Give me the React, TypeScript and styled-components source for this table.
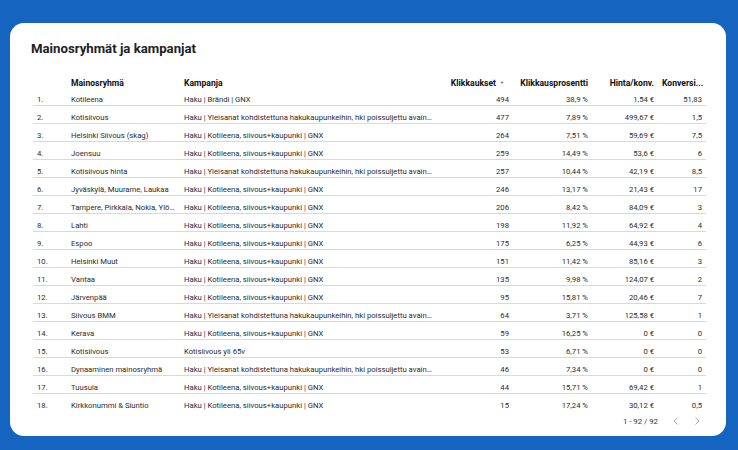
import styled, { createGlobalStyle } from "styled-components";

const GlobalStyle = createGlobalStyle`
  html, body {
    margin: 0;
    padding: 0;
    background: #1565c0;
  }
  body {
    font-family: Roboto, "Liberation Sans", sans-serif;
  }
`;

interface IRow {
    group: string
    campaign: string
    clicks: string
    ctr: string
    cost: string
    conv: string
}

const BRAND = "Haku | Kotileena, siivous+kaupunki | GNX";
const GENERIC = "Haku | Yleisanat kohdistettuna hakukaupunkeihin, hki poissuljettu avainsanat";

const rows: IRow[] = [
    {group: "Kotileena", campaign: "Haku | Brändi | GNX", clicks: "494", ctr: "38,9 %", cost: "1,54 €", conv: "51,83"},
    {group: "Kotisiivous", campaign: GENERIC, clicks: "477", ctr: "7,89 %", cost: "499,67 €", conv: "1,5"},
    {group: "Helsinki Siivous (skag)", campaign: BRAND, clicks: "264", ctr: "7,51 %", cost: "59,69 €", conv: "7,5"},
    {group: "Joensuu", campaign: BRAND, clicks: "259", ctr: "14,49 %", cost: "53,6 €", conv: "6"},
    {group: "Kotisiivous hinta", campaign: GENERIC, clicks: "257", ctr: "10,44 %", cost: "42,19 €", conv: "8,5"},
    {group: "Jyväskylä, Muurame, Laukaa", campaign: BRAND, clicks: "246", ctr: "13,17 %", cost: "21,43 €", conv: "17"},
    {group: "Tampere, Pirkkala, Nokia, Ylöjärvi", campaign: BRAND, clicks: "206", ctr: "8,42 %", cost: "84,09 €", conv: "3"},
    {group: "Lahti", campaign: BRAND, clicks: "198", ctr: "11,92 %", cost: "64,92 €", conv: "4"},
    {group: "Espoo", campaign: BRAND, clicks: "175", ctr: "6,25 %", cost: "44,93 €", conv: "6"},
    {group: "Helsinki Muut", campaign: BRAND, clicks: "151", ctr: "11,42 %", cost: "85,16 €", conv: "3"},
    {group: "Vantaa", campaign: BRAND, clicks: "135", ctr: "9,98 %", cost: "124,07 €", conv: "2"},
    {group: "Järvenpää", campaign: BRAND, clicks: "95", ctr: "15,81 %", cost: "20,46 €", conv: "7"},
    {group: "Siivous BMM", campaign: GENERIC, clicks: "64", ctr: "3,71 %", cost: "125,58 €", conv: "1"},
    {group: "Kerava", campaign: BRAND, clicks: "59", ctr: "16,25 %", cost: "0 €", conv: "0"},
    {group: "Kotisiivous", campaign: "Kotisiivous yli 65v", clicks: "53", ctr: "6,71 %", cost: "0 €", conv: "0"},
    {group: "Dynaaminen mainosryhmä", campaign: GENERIC, clicks: "46", ctr: "7,34 %", cost: "0 €", conv: "0"},
    {group: "Tuusula", campaign: BRAND, clicks: "44", ctr: "15,71 %", cost: "69,42 €", conv: "1"},
    {group: "Kirkkonummi & Siuntio", campaign: BRAND, clicks: "15", ctr: "17,24 %", cost: "30,12 €", conv: "0,5"},
];

const App = () => {
    return <SPage>
        <GlobalStyle/>
        <SCard>
            <STitle>Mainosryhmät ja kampanjat</STitle>
            <STable>
                <SHeaderRow>
                    <SCell/>
                    <SHeadCell>Mainosryhmä</SHeadCell>
                    <SHeadCell>Kampanja</SHeadCell>
                    <SHeadCell $right>Klikkaukset<SSortArrow>▼</SSortArrow></SHeadCell>
                    <SHeadCell $right>Klikkausprosentti</SHeadCell>
                    <SHeadCell $right>Hinta/konv.</SHeadCell>
                    <SHeadCell $right>Konversi...</SHeadCell>
                </SHeaderRow>
                {rows.map((row, i) => <SRow key={i}>
                    <SCell>{i + 1}.</SCell>
                    <SCell>{row.group}</SCell>
                    <SCell>{row.campaign}</SCell>
                    <SCell $right>{row.clicks}</SCell>
                    <SCell $right>{row.ctr}</SCell>
                    <SCell $right>{row.cost}</SCell>
                    <SCell $right>{row.conv}</SCell>
                </SRow>)}
            </STable>
            <SPager>
                <SPagerText>1 - 92 / 92</SPagerText>
                <SChevron>
                    <svg width="10" height="10" viewBox="0 0 10 10"><path d="M6.5 1.5 L3 5 L6.5 8.5" fill="none" stroke="currentColor" strokeWidth="1"/></svg>
                </SChevron>
                <SChevron>
                    <svg width="10" height="10" viewBox="0 0 10 10"><path d="M3.5 1.5 L7 5 L3.5 8.5" fill="none" stroke="currentColor" strokeWidth="1"/></svg>
                </SChevron>
            </SPager>
        </SCard>
    </SPage>
}

const SPage = styled.main`
  width: 738px;
  height: 450px;
  box-sizing: border-box;
  padding: 23px 12px 14px 10px;
`

const SCard = styled.section`
  height: 413px;
  box-sizing: border-box;
  background: #fff;
  border-radius: 14px;
  padding: 17px 20px 0 23px;
`

const STitle = styled.h1`
  margin: 0 0 13px -2px;
  font-size: 13.2px;
  line-height: 18px;
  font-weight: 700;
  color: #202124;
`

const STable = styled.div`
  display: flex;
  flex-direction: column;
`

const SRowBase = styled.div`
  display: grid;
  grid-template-columns: 34px 113px 257px 76px 79px 66px 48px;
  height: 17px;
`

const SHeaderRow = styled(SRowBase)``

const SRow = styled(SRowBase)`
  border-bottom: 1px solid #d9d9d9;

  &:last-child {
    border-bottom: none;
  }
`

const SCell = styled.div<{ $right?: boolean }>`
  padding: 7px 4px 0;
  font-size: 7.7px;
  line-height: 10px;
  color: #2b2b2b;
  white-space: nowrap;
  overflow: hidden;
  text-overflow: ellipsis;
  text-align: ${({$right}) => $right ? "right" : "left"};
`

const SHeadCell = styled(SCell)`
  font-size: 8.6px;
  font-weight: 700;
  color: #111;
  overflow: visible;
`

const SSortArrow = styled.span`
  display: inline-block;
  font-size: 4px;
  margin: 0 5px 0 4px;
  vertical-align: 2px;
  color: #555;
`

const SPager = styled.div`
  display: flex;
  justify-content: flex-end;
  align-items: center;
  gap: 9px;
  padding: 2px 3px 0 0;
  height: 16px;
`

const SPagerText = styled.span`
  font-size: 7.8px;
  color: #333;
  margin-right: 3px;
`

const SChevron = styled.span`
  display: flex;
  color: #aaa;
  width: 12px;
  justify-content: center;
`

export default App
